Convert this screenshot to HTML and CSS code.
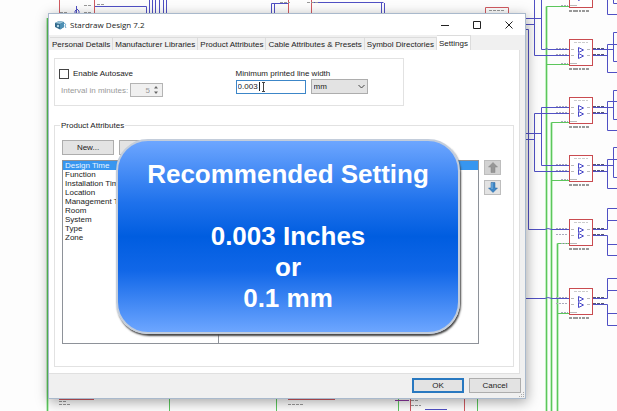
FILE: index.html
```html
<!DOCTYPE html>
<html lang="en">
<head>
<meta charset="utf-8">
<title>Stardraw Design 7.2</title>
<link rel="stylesheet" href="styles.css">
</head>
<body>
<div class="desktop">
  <svg class="schematic" width="617" height="411" viewBox="0 0 617 411" aria-hidden="true">
    <defs>
      <g id="amp">
        <rect x=".5" y=".5" width="23" height="26" fill="#fff" stroke="#c94b50"/>
        <path d="M5 3.500h14" stroke="#ccc" stroke-dasharray="3 1"/>
        <path d="M9.500 8.500v5l5-2.500zM9.500 14.500v5l5-2.500z" fill="none" stroke="#4848c8"/>
        <path d="M2 10.500h3M2 16.500h3M18 10.500h3M18 16.500h3M1 24.500h7" stroke="#bbb"/>
        <path d="M0 30h20" stroke="#999" stroke-width="2" stroke-dasharray="3 1 5 1 2 1"/>
        <path d="M-13 9.500h12M-13 15.500h12M-8 24.500h7" stroke="#aab" stroke-dasharray="2 1"/>
        <path d="M24 10.500h13M24 16.500h13" stroke="#5050c4"/>
        <path d="M24 9.500h12M24 15.500h12" stroke="#557" stroke-dasharray="3 1"/>
      </g>
    </defs>
    <g class="green">
      <path d="M546.500 411V6.500M551.500 411V122.500M557.500 411V243.500M47.500 18V411" class="glow"/>
      <path d="M546.500 411V6.500H569M546.500 64.500H569M551.500 411V122.500H569M551.500 180.500H569M557.500 411V243.500H569M557.500 313.500H569"/>
      <path d="M47.500 18V411M169.500 398v13M276.500 398v13M398.500 398v13M477.500 398v13"/>
    </g>
    <g class="blue">
      <path d="M541.500 0V49.500H545q2-2 3 0H569M534.500 0V55.500H569M525 18.500H541M525 24.500H534M525 29.500H528.500V229.500H545q2-2 7 0H569"/>
      <path d="M569 107.500H541.500V165.500H569M569 113.500H534.500V171.500H569M525 133.500H541M525 139.500H534M525 298.500H545q2-2 7 0H569"/>
      <path d="M617 14.500H607.500V0M617 3.500H613.500V0"/>
      <path d="M592 49.500H613M592 55.500H607M617 44.500H607.500V72.500H617M617 32.500H613.500V61.500H617"/>
      <path d="M592 107.500H613M592 113.500H607M617 101.500H607.500V130.500H617M617 90.500H613.500V119.500H617"/>
      <path d="M592 165.500H613M592 171.500H607M617 159.500H607.500V188.500H617M617 147.500H613.500V177.500H617"/>
      <path d="M592 229.500H607.500V208.500H617M607 220.500H617M592 235.500H607.500V255.500H617M607 244.500H617"/>
      <path d="M592 298.500H607.500V278.500H617M607 290.500H617M592 304.500H607.500V325.500H617M607 313.500H617"/>
      <path d="M94 6.500H146.500V13M149.500 0V13M152.500 0V13M155.500 0V13M159.500 0V13M163.500 0V13M166.500 0V13M76.500 6v7M75 13v-2l2-2 2 2v2"/>
      <path d="M271.500 13V3.500H288M274.500 13V3M311 2.500H383.500M381.500 13V3M384.500 13V3M425 409.500h22"/>
    </g>
    <g class="red">
      <path d="M59.500 0V13M94.500 0V13M288.500 0V13M311.500 0V13M485.500 13V7.500H508.500V13"/>
      <path d="M59 399.500H94M288 399.500H335M410.500 398V411M464.500 398V411"/>
    </g>
    <path d="M395 400.500h14" stroke="#8c35a0"/>
    <path d="M60 12.500h8M84 5.500h8M84 12.500h8M97 4.500h7M280 2.500h10M307 2.500h12M489 10.500h15M59 401.500h8M59 404.500h12M288 404.500h15M411 400.500h8M411 405.500h10" stroke="#999" stroke-dasharray="3 1"/>
    <use href="#amp" x="569" y="-19"/>
    <use href="#amp" x="569" y="39"/>
    <use href="#amp" x="569" y="97"/>
    <use href="#amp" x="569" y="155"/>
    <use href="#amp" x="569" y="219"/>
    <use href="#amp" x="569" y="288"/>
  </svg>

  <main class="dialog">
    <header class="titlebar">
      <svg class="app-icon" width="12" height="10" viewBox="0 0 12 10" aria-hidden="true">
        <path d="M0 3l4-2 5 1v5L5 9.500 0 7z" fill="#32698a"/>
        <path d="M0 3l4-2 5 1-4 2z" fill="#94c0d6"/>
        <path d="M5 4l4-2v5L5 9.500z" fill="#4d90b5"/>
        <circle cx="3" cy="6" r="1.200" fill="#b7d9e8"/>
        <path d="M9 3q3 1 1 3l1 2" fill="none" stroke="#67a4c9"/>
      </svg>
      <h1 class="title">Stardraw Design 7.2</h1>
      <div class="window-buttons">
        <button class="window-button" aria-label="Minimize"><svg width="8" height="8" viewBox="0 0 8 8"><path d="M0 4.500h8"/></svg></button>
        <button class="window-button" aria-label="Maximize"><svg width="8" height="8" viewBox="0 0 8 8"><path d="M.5.500h7v7h-7z"/></svg></button>
        <button class="window-button" aria-label="Close"><svg width="8" height="8" viewBox="0 0 8 8"><path d="M.5.5l7 7M7.500.5l-7 7"/></svg></button>
      </div>
    </header>

    <nav class="tabs" role="tablist">
      <button class="tab" role="tab">Personal Details</button>
      <button class="tab" role="tab">Manufacturer Libraries</button>
      <button class="tab" role="tab">Product Attributes</button>
      <button class="tab" role="tab">Cable Attributes &amp; Presets</button>
      <button class="tab" role="tab">Symbol Directories</button>
      <button class="tab tab-active" role="tab" aria-selected="true">Settings</button>
    </nav>

    <section class="page">
      <div class="options">
        <div class="autosave">
          <div class="check-row">
            <input class="check" type="checkbox" id="autosave">
            <label for="autosave">Enable Autosave</label>
          </div>
          <div class="interval">
            <label for="interval">Interval in minutes:</label>
            <span class="spinner">
              <input class="spinner-input" id="interval" type="text" value="5" disabled>
              <svg width="6" height="10" viewBox="0 0 6 10" aria-hidden="true"><path d="M1 3.500l2-2.500 2 2.500zM1 6.500l2 2.500 2-2.500z" fill="#666"/></svg>
            </span>
          </div>
        </div>
        <div class="line-width">
          <label for="width">Minimum printed line width</label>
          <div class="width-fields">
            <span class="width-box">
              <input class="width-input" id="width" type="text" value="0.003">
              <svg class="caret" width="8" height="12" viewBox="0 0 8 12" aria-hidden="true"><path d="M.5 1v9" stroke="#222"/><path d="M3 1.500h3M3 10.500h3M4.500 1.500v9" stroke="#444"/></svg>
            </span>
            <span class="unit-box">
              <select class="unit" aria-label="Unit"><option>mm</option><option>inches</option></select>
              <svg class="chevron" width="7" height="5" viewBox="0 0 7 5" aria-hidden="true"><path d="M.5 1l3 3 3-3" fill="none" stroke="#444"/></svg>
            </span>
          </div>
        </div>
      </div>

      <fieldset class="attributes">
        <legend>Product Attributes</legend>
        <div class="list-buttons">
          <button class="button">New...</button>
          <button class="button">Edit...</button>
        </div>
        <div class="list-row">
          <ul class="list">
            <li class="selected">Design Time</li>
            <li>Function</li>
            <li>Installation Time</li>
            <li>Location</li>
            <li>Management Time</li>
            <li>Room</li>
            <li>System</li>
            <li>Type</li>
            <li>Zone</li>
          </ul>
          <div class="order-buttons">
            <button class="order" aria-label="Move up"><svg width="10" height="11" viewBox="0 0 10 11"><path d="M5 .5L9.500 5H7v5.500H3V5H.5z" fill="#979797" stroke="#858585" stroke-width=".5"/></svg></button>
            <button class="order order-down" aria-label="Move down"><svg width="10" height="11" viewBox="0 0 10 11"><path d="M5 10.500L9.500 6H7V.5H3V6H.5z" fill="#3e86c6" stroke="#2a659f" stroke-width=".5"/><path d="M4 1v6" stroke="#82b9e4"/></svg></button>
          </div>
        </div>
      </fieldset>
    </section>

    <footer class="footer">
      <button class="button button-default">OK</button>
      <button class="button">Cancel</button>
      <svg class="grip" width="6" height="6" viewBox="0 0 6 6" aria-hidden="true"><path d="M4 0h1v1H4zM2 2h1v1H2zM4 2h1v1H4zM0 4h1v1H0zM2 4h1v1H2zM4 4h1v1H4z" fill="#aaa"/></svg>
    </footer>
  </main>

  <aside class="callout">
    <p>Recommended Setting</p>
    <p class="callout-value">0.003 Inches</p>
    <p>or</p>
    <p>0.1 mm</p>
  </aside>
</div>
</body>
</html>
```
FILE: styles.css
```css
* { box-sizing: border-box; }

body {
  margin: 0;
  background: #fdfdfd;
  color: #222;
  font: 8px/11px "Liberation Sans", Arial, sans-serif;
}

button, input, select {
  margin: 0;
  padding: 0;
  border: 0;
  border-radius: 0;
  color: inherit;
  font: inherit;
}

.desktop {
  position: relative;
  display: flex;
  min-height: 100vh;
  padding: 13px 91px 12px 48px;
  overflow: hidden;
}

.schematic { position: absolute; top: 0; left: 0; }
.green { fill: none; stroke: #5cc65c; }
.glow { stroke: #c4efc4; stroke-width: 3; }
.blue { fill: none; stroke: #5050c4; }
.red { fill: none; stroke: #d05a60; }

.dialog {
  position: relative;
  display: flex;
  flex: 1;
  flex-direction: column;
  min-width: 0;
  border: 1px solid #a9b9cc;
  background: #f0f0f0;
  box-shadow: 1px 3px 12px rgba(0, 0, 0, .35);
}

.titlebar {
  display: flex;
  align-items: center;
  height: 21px;
  padding-left: 6px;
  background: #fff;
}
.title {
  flex: 1;
  margin: 0 0 0 3px;
  font: 8px/11px "Open Sans", "Noto Sans", sans-serif;
}
.window-buttons { display: flex; }
.window-button {
  display: grid;
  width: 32px;
  height: 20px;
  place-items: center;
  background: none;
}
.window-button path { fill: none; stroke: #222; }

.tabs {
  display: flex;
  align-items: flex-end;
  height: 15px;
  padding-left: 1px;
}
.tab {
  height: 13px;
  padding: 0 2px;
  border: solid #dcdcdc;
  border-width: 1px 1px 0 0;
  background: #f0f0f0;
  white-space: nowrap;
}
.tab-active {
  height: 15px;
  background: #fff;
}

.page {
  display: flex;
  flex: 1;
  flex-direction: column;
  gap: 14px;
  margin-right: 5px;
  padding: 8px 5px 6px;
  border: 1px solid #e0e0e0;
  border-left: 0;
  border-top: 0;
  background: #fff;
}

.options {
  display: flex;
  width: 76%;
  height: 48px;
  padding: 9px 4px;
  border: 1px solid #e2e2e2;
}
.autosave { width: 52%; }
.check-row, .interval { display: flex; align-items: center; }
.check-row { gap: 4px; }
.check {
  width: 10px;
  height: 10px;
  border: 1px solid #444;
  background: #fff;
  appearance: none;
}
.interval {
  justify-content: space-between;
  width: 104px;
  margin-top: 4px;
  padding-left: 2px;
  color: #999;
  white-space: nowrap;
}
.spinner {
  display: flex;
  align-items: center;
  width: 33px;
  height: 14px;
  padding-right: 3px;
  border: 1px solid #b4b4b4;
  background: #f0f0f0;
}
.spinner-input {
  flex: 1;
  min-width: 0;
  padding-right: 3px;
  background: none;
  text-align: right;
}
.line-width label { display: block; }
.width-fields {
  display: flex;
  align-items: center;
  gap: 5px;
}
.width-box, .unit-box { position: relative; display: flex; }
.width-input {
  width: 70px;
  height: 14px;
  padding-left: 1px;
  border: 1px solid #3c86c8;
  background: #fff;
}
.caret { position: absolute; top: 1px; left: 23px; }
.unit {
  width: 57px;
  height: 15px;
  padding-left: 2px;
  border: 1px solid #adadad;
  background: #e3e3e3;
  appearance: none;
}
.chevron { position: absolute; top: 5px; right: 3px; pointer-events: none; }

.attributes {
  display: flex;
  flex: 1;
  flex-direction: column;
  min-width: 0;
  margin: 0;
  padding: 9px 12px 22px 7px;
  border: 1px solid #e2e2e2;
}
.attributes legend { margin-left: -2px; padding: 0 1px; }

.list-buttons { display: flex; gap: 5px; }
.button {
  width: 52px;
  height: 15px;
  border: 1px solid #adadad;
  background: #e3e3e3;
}
.button-default { border: 2px solid #2878c0; }

.list-row {
  display: flex;
  flex: 1;
  gap: 5px;
  margin-top: 5px;
}
.list {
  position: relative;
  flex: 1;
  margin: 0;
  padding: 0;
  border: 1px solid #8e9299;
  background: #fff;
  line-height: 9px;
  list-style: none;
}
.list::after {
  content: "";
  position: absolute;
  top: 0;
  bottom: 0;
  left: 155px;
  border-left: 1px solid #8e9299;
}
.list li { padding-left: 2px; }
.selected { background: #3796f0; color: #e8f4ff; }
.order-buttons { display: flex; flex-direction: column; gap: 5px; }
.order {
  display: grid;
  width: 17px;
  height: 15px;
  place-items: center;
  border: 1px solid #bdbdbd;
  background: #d2d2d2;
}
.order-down { background: #e3e3e3; }

.footer {
  position: relative;
  display: flex;
  justify-content: flex-end;
  gap: 5px;
  padding: 4px 4px 5px 0;
}
.grip { position: absolute; right: 0; bottom: 0; }

.callout {
  position: absolute;
  top: 139px;
  left: 116px;
  right: 157px;
  padding: 18px 0;
  border: 2px solid #c3cddb;
  border-radius: 32px;
  background: linear-gradient(#6da6ff, #1f72ec 32%, #005de0 50%, #1167e8 68%, #6da6ff);
  box-shadow: 1px 2px 2px #444;
  color: #fff;
  font: bold 26px/31px "Liberation Sans", sans-serif;
  text-align: center;
}
.callout p { margin: 0; }
.callout .callout-value { margin-top: 31px; }
```
